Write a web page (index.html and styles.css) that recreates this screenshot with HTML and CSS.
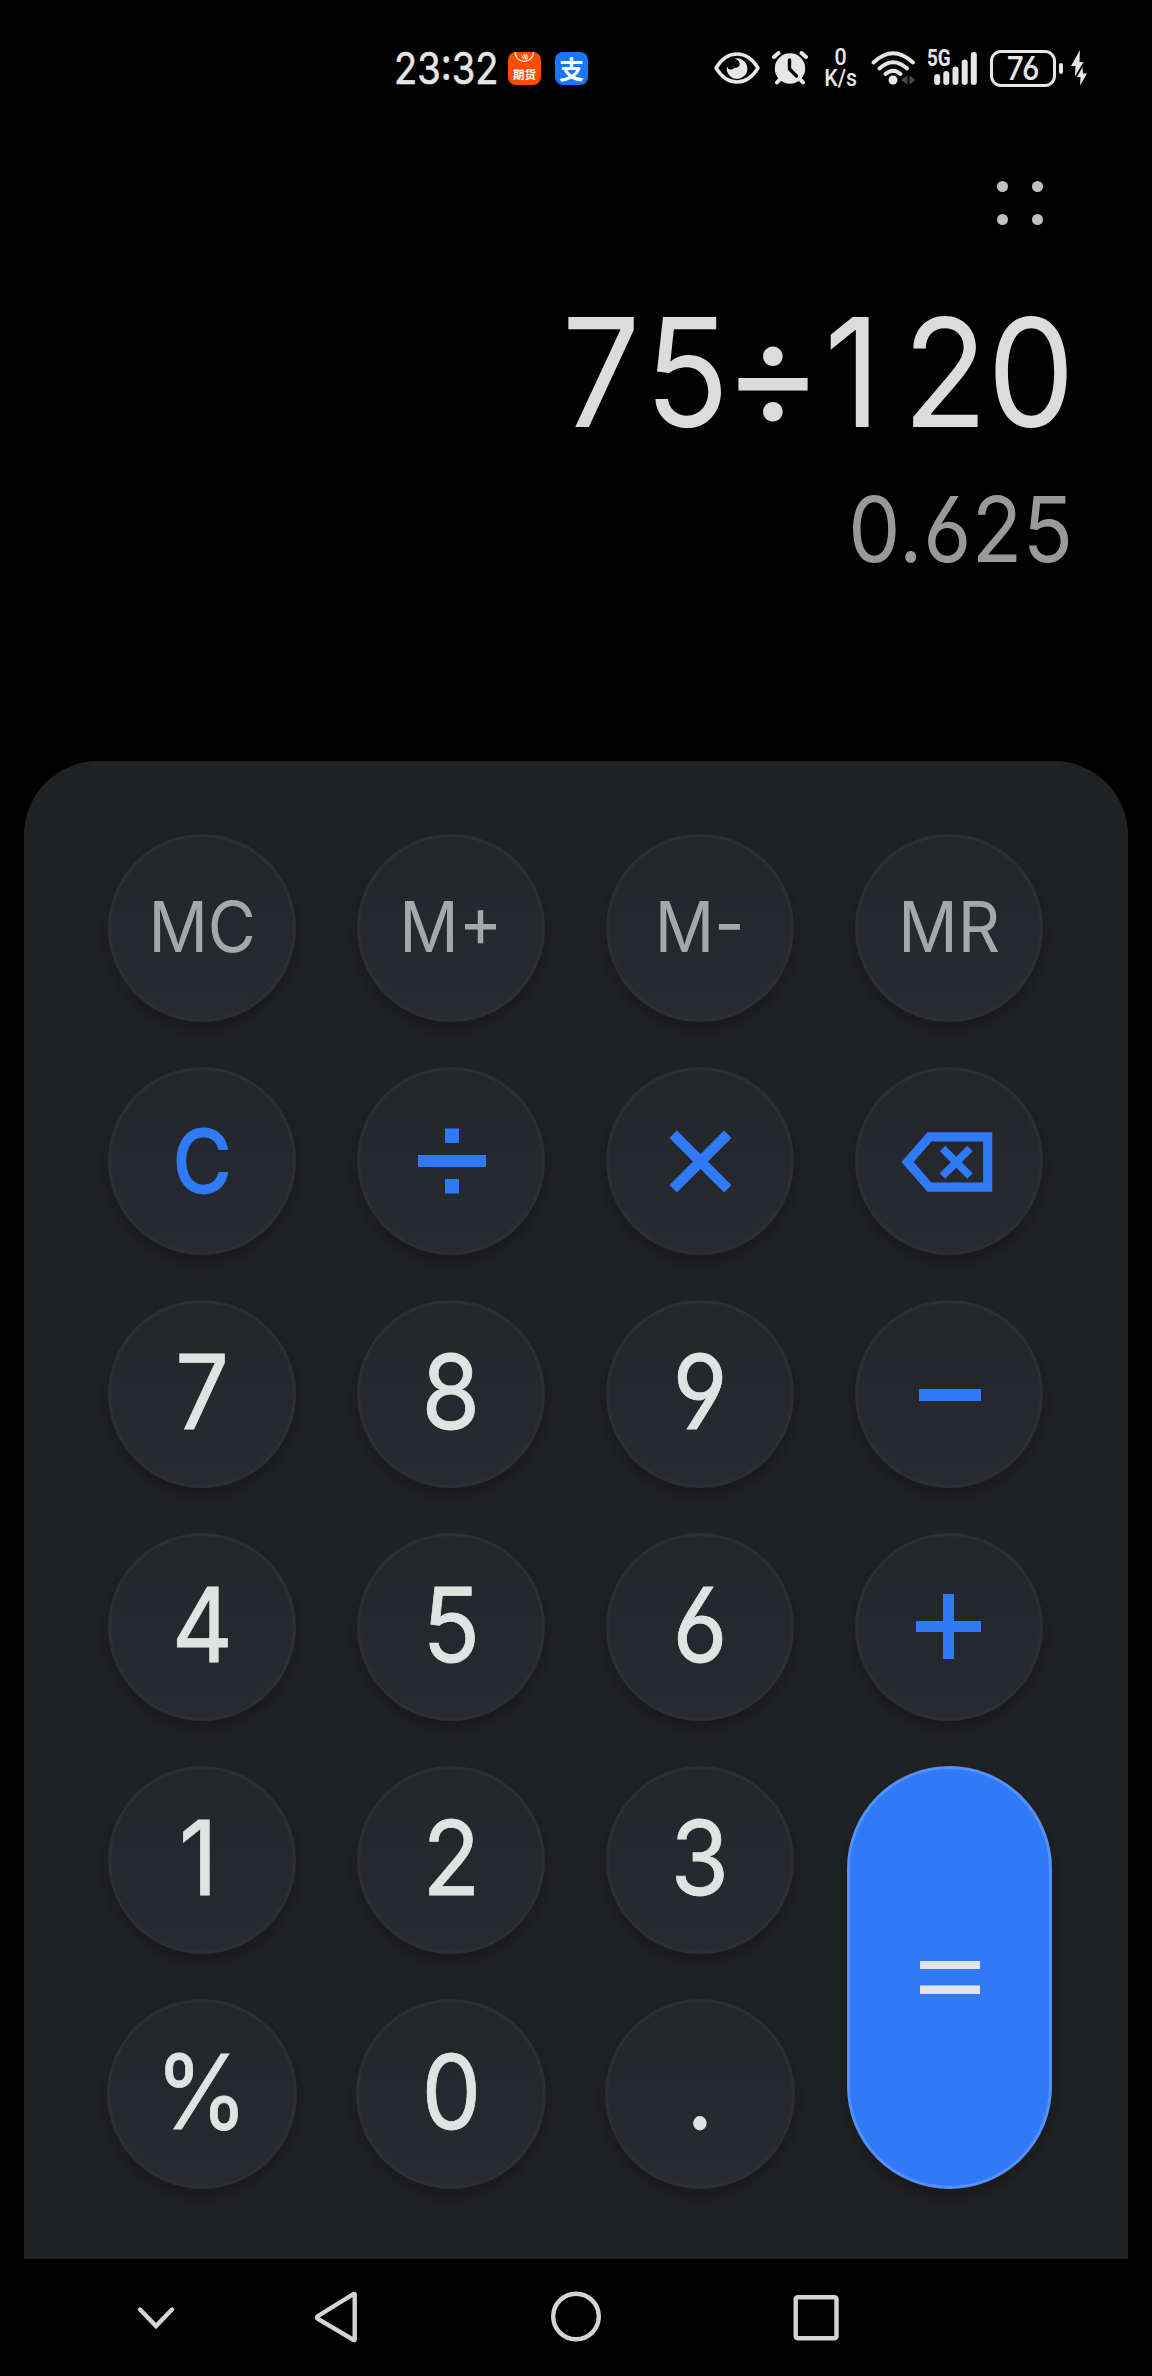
FILE: index.html
```html
<!DOCTYPE html>
<html lang="zh-CN">
<head>
    <meta charset="UTF-8">
    <meta name="viewport" content="width=device-width, initial-scale=1.0">
    <title>Calculator</title>
    <link rel="stylesheet" href="styles.css">
</head>
<body>
    <header class="status-bar">
        <div class="clock"><span>23:32</span></div>
        <div class="app-icon futures">
            <svg width="33" height="14" viewBox="0 0 33 14" fill="none" stroke="#fff">
                <path d="M7 0a9.300 9.300 0 0 0 18.600 0" stroke-width="1.200"/>
                <path d="M13.500 3.500l2.500 3M15.500 2.500q2.500 2 1.500 5M18 2q2 2.500 .5 5.500" stroke-width="1.100"/>
            </svg>
            <span>期货</span>
        </div>
        <div class="app-icon alipay"><span>支</span></div>

        <div class="indicators">
            <svg class="eye" width="46" height="32" viewBox="0 0 46 32">
                <path d="M2 16Q10.500 2 23 2T44 16Q35.500 30 23 30T2 16z" fill="none" stroke="#e6e6e6" stroke-width="3.400" stroke-linejoin="round"/>
                <path d="M21 6.500A10.300 10.300 0 1 1 13 14.500q1.500 3.500 4.500 3 2.500-.5 3-2 3.500 1 5-2 1-4.500-4.500-7z" fill="#e6e6e6"/>
            </svg>
            <svg class="alarm" width="36" height="34" viewBox="0 0 36 34">
                <g stroke="#e6e6e6" stroke-width="4" stroke-linecap="round">
                    <path d="M2 6L6.500 2M34 6L29.500 2M5 31.500L9 27M31 31.500L27 27"/>
                </g>
                <circle cx="18" cy="17.500" r="15.200" fill="#e6e6e6"/>
                <path d="M17.500 9v9l7 7" fill="none" stroke="#000" stroke-width="3.400" stroke-linecap="round" stroke-linejoin="round"/>
            </svg>
            <div class="speed"><span>0</span><span>K/s</span></div>
            <svg class="wifi" width="46" height="34" viewBox="0 0 46 34">
                <g fill="none" stroke="#e6e6e6" stroke-width="3.800" stroke-linecap="round">
                    <path d="M2.500 11.500Q22 -7 42 11.500M8.500 17.500Q22 5 36 17.500M14.500 23Q22 16.500 29.500 23"/>
                </g>
                <circle cx="22" cy="29" r="4.500" fill="#e6e6e6"/>
                <path d="M36.500 24.500v9l-6.500-4.500zM38.500 24.500v9l6-4.500z" fill="#4a4a4a"/>
            </svg>
            <div class="signal">
                <span>5G</span>
                <svg width="44" height="34" viewBox="0 0 44 34" stroke="#e6e6e6" stroke-width="6" stroke-linecap="round">
                    <path d="M3.200 26v5M12.300 23v8M21.500 18.500v12.500M30.700 11.500v19.500M39.800 4v27"/>
                </svg>
            </div>
            <div class="battery"><span>76</span></div>
            <div class="battery-cap"></div>
            <svg class="bolt" width="16" height="36" viewBox="0 0 16 36" fill="#e6e6e6">
                <path d="M9 0L0 16h4.500L4 26.500 12.500 12H8.500z"/>
                <path d="M11.500 17L6 27h3.500L9 35.500 16 23.500H12z"/>
            </svg>
        </div>
    </header>

    <div class="toolbar">
        <div class="more"><i></i><i></i><i></i><i></i></div>
    </div>

    <div class="display">
        <div class="expression"><span>7</span><span>5</span><span class="operator">÷</span><span class="one">1</span><span>2</span><span>0</span></div>
        <div class="result"><span>0.625</span></div>
    </div>

    <main class="keypad">
        <button class="key memory"><span>MC</span></button>
        <button class="key memory"><span>M+</span></button>
        <button class="key memory"><span>M-</span></button>
        <button class="key memory"><span>MR</span></button>

        <button class="key clear"><span>C</span></button>
        <button class="key" aria-label="divide">
            <svg width="70" height="66" viewBox="0 0 70 66" fill="#317af7"><path d="M2 27h68v12H2zM29 .5h14v14.500H29zM29 51h14v14.500H29z"/></svg>
        </button>
        <button class="key" aria-label="multiply">
            <svg width="62" height="62" viewBox="0 0 62 62" stroke="#317af7" stroke-width="10.500"><path d="M4.200 4.300L58.800 58.700M58.800 4.300L4.200 58.700"/></svg>
        </button>
        <button class="key" aria-label="backspace">
            <svg width="96" height="62" viewBox="2 -2 96 62" fill="none" stroke="#317af7">
                <path d="M30.500 4.800H88.700V55.200H30.500L8.500 30z" stroke-width="9.200"/>
                <path d="M43.500 16.500L71 44M71 16.500L43.500 44" stroke-width="7.600"/>
            </svg>
        </button>

        <button class="key"><span>7</span></button>
        <button class="key"><span>8</span></button>
        <button class="key"><span>9</span></button>
        <button class="key" aria-label="minus">
            <svg width="64" height="14" viewBox="0 0 64 14"><path d="M2 2h62v12H2z" fill="#317af7"/></svg>
        </button>

        <button class="key"><span>4</span></button>
        <button class="key"><span>5</span></button>
        <button class="key"><span>6</span></button>
        <button class="key" aria-label="plus">
            <svg width="66" height="66" viewBox="0 0 66 66"><path d="M27 0h11v27h27v11H38v27H27V38H0V27h27z" fill="#317af7"/></svg>
        </button>

        <button class="key"><span class="one">1</span></button>
        <button class="key"><span>2</span></button>
        <button class="key"><span>3</span></button>
        <button class="key equals" aria-label="equals">
            <svg width="61" height="33" viewBox="-1 0 61 33"><path d="M0 0h60v8H0zM0 24.500h60v8.500H0z" fill="#e1e5ea"/></svg>
        </button>

        <button class="key large"><span>%</span></button>
        <button class="key large"><span>0</span></button>
        <button class="key large"><span>.</span></button>
    </main>

    <nav class="nav-bar">
        <svg class="nav-hide" width="60" height="60" viewBox="0 0 60 60"><path d="M14 22.500L30 39 46 22.500"/></svg>
        <svg class="nav-back" width="60" height="60" viewBox="0 0 60 60"><path d="M48.700 7.500v45q0 1-1 .5L12 32q-2-1.500 0-3L47.700 7q1-.5 1 .5z"/></svg>
        <svg class="nav-home" width="60" height="60" viewBox="0 0 60 60"><circle cx="30" cy="29.500" r="22.800"/></svg>
        <svg class="nav-recent" width="60" height="60" viewBox="0 0 60 60"><rect x="9.700" y="10.200" width="40.800" height="41" rx="2"/></svg>
    </nav>
</body>
</html>
```

FILE: styles.css
```css
* {
    box-sizing: border-box;
}

body {
    margin: 0;
    width: 1152px;
    height: 2376px;
    background: #000;
    color: #e6e6e6;
    font-family: Inter, Roboto, "Noto Sans CJK SC", sans-serif;
    font-feature-settings: "cv03", "cv04";
    display: flex;
    flex-direction: column;
    overflow: hidden;
}

svg {
    display: block;
    flex: none;
}

/* status bar */
.status-bar {
    height: 136px;
    padding-left: 394px;
    display: flex;
    align-items: center;
}

.clock {
    width: 114px;
    font-size: 44px;
    line-height: 50px;
}

.clock span {
    display: inline-block;
    transform: scaleX(0.865);
    transform-origin: left;
    -webkit-text-stroke: 0.6px;
}

.app-icon {
    width: 33px;
    height: 33px;
    border-radius: 8px;
    color: #fff;
    text-align: center;
    font-family: "Noto Sans CJK SC", sans-serif;
    font-weight: 700;
}

.futures {
    background: #ff4d00;
    font-size: 11.5px;
    line-height: 14px;
}

.futures span {
    display: block;
    margin-top: 1px;
}

.alipay {
    margin-left: 14px;
    background: #1777ff;
    font-size: 25px;
    line-height: 32px;
}

.indicators {
    margin-left: 126px;
    display: flex;
    align-items: center;
}

.alarm {
    margin-left: 12px;
}

.speed {
    width: 35px;
    margin-left: 15px;
    display: flex;
    flex-direction: column;
    text-align: center;
    font-family: Roboto, sans-serif;
    font-size: 23px;
    line-height: 21px;
    font-weight: 500;
}

.speed span {
    transform: scaleX(0.93);
}

.wifi {
    margin-left: 13px;
}

.signal {
    position: relative;
    margin-left: 17px;
}

.signal span {
    position: absolute;
    left: -7px;
    top: -3px;
    font-family: Roboto, sans-serif;
    font-size: 23px;
    line-height: 22px;
    font-weight: 700;
    transform: scaleX(0.82);
    transform-origin: left;
}

.battery {
    width: 66px;
    height: 37px;
    margin-left: 12px;
    border: 3px solid #e6e6e6;
    border-radius: 11px;
    text-align: center;
    font-size: 33px;
    line-height: 31px;
    font-weight: 500;
}

.battery span {
    display: inline-block;
    transform: scaleX(0.9);
}

.battery-cap {
    width: 4px;
    height: 11px;
    margin-left: 3px;
    border-radius: 2px;
    background: #e6e6e6;
}

.bolt {
    margin-left: 8px;
}

/* four dots menu */
.toolbar {
    height: 134px;
    padding-right: 109px;
    display: flex;
    justify-content: flex-end;
    align-items: center;
}

.more {
    display: grid;
    grid-template-columns: 11px 11px;
    gap: 22px 24px;
}

.more i {
    height: 11px;
    border-radius: 50%;
    background: #c0c0c0;
}

/* expression and live result */
.display {
    height: 491px;
    padding-right: 78px;
}

.expression {
    display: flex;
    justify-content: flex-end;
    color: #dcdcdc;
    font-size: 151px;
    line-height: 204px;
}

/* every character takes a cell of the same width */
.expression span {
    width: 86px;
    display: flex;
    justify-content: center;
    transform: scaleX(0.92);
}

.expression .operator {
    transform: scaleX(1);
}

.expression .one {
    padding-right: 14px;
}

.result {
    color: #999;
    font-size: 91px;
    line-height: 110px;
    letter-spacing: 0.5px;
    text-align: right;
}

.result span {
    display: inline-block;
    transform: scaleX(0.91);
    transform-origin: right;
}

/* keypad */
.keypad {
    height: 1498px;
    margin: 0 24px;
    padding: 73px 84px 0;
    border-radius: 74px 74px 0 0;
    background: #212224;
    display: grid;
    grid-template-columns: repeat(4, 188px);
    grid-template-rows: repeat(5, 188px) 190px;
    gap: 45px 61px;
    justify-items: center;
}

.key {
    width: 188px;
    height: 188px;
    padding: 0;
    border: 3px solid #2c2e32;
    border-radius: 94px;
    background: linear-gradient(#23272a, #272a30) padding-box, #2c2e32;
    box-shadow: 0 8px 18px rgba(0, 0, 0, 0.28);
    color: #e1e3e2;
    font-family: inherit;
    font-feature-settings: inherit;
    font-size: 103px;
    line-height: 120px;
    display: flex;
    justify-content: center;
    align-items: center;
}

.key span {
    padding-bottom: 5px;
    transform: scaleX(0.92);
    -webkit-text-stroke: 0.8px;
}

.key .one {
    padding-right: 9px;
}

.key.memory {
    color: #a6a7a9;
    font-size: 70px;
}

.memory span {
    padding-bottom: 3px;
    transform: scaleX(0.94);
    -webkit-text-stroke: 0;
}

.key.clear {
    color: #317af7;
    font-size: 88px;
    font-weight: 500;
}

.clear span {
    padding: 0;
}

.large {
    width: 190px;
    height: 190px;
    border-radius: 95px;
}

.equals {
    grid-row: span 2;
    width: 205px;
    height: 423px;
    border-color: #5590f5;
    border-radius: 103px;
    background: #317af7;
}

/* system navigation */
.nav-bar {
    height: 117px;
    padding: 0 0 1px 126px;
    display: flex;
    align-items: center;
}

.nav-bar svg {
    fill: none;
    stroke: #d4d4d4;
    stroke-width: 4.4;
    stroke-linecap: round;
}

.nav-back {
    margin-left: 120px;
}

.nav-home,
.nav-recent {
    margin-left: 180px;
}
```
